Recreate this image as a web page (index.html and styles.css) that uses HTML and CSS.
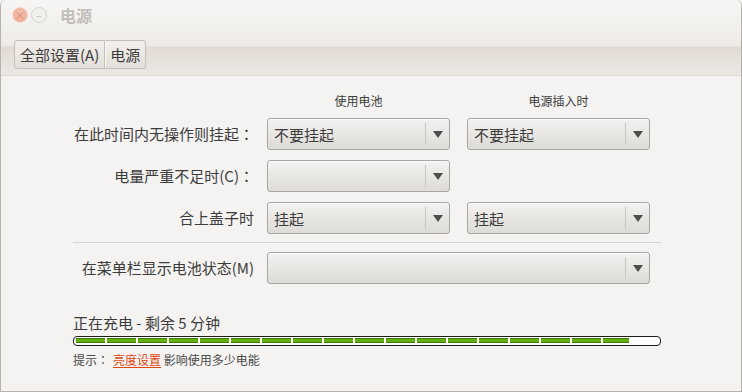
FILE: index.html
```html
<!DOCTYPE html>
<html lang="zh-CN">
<head>
  <meta charset="UTF-8">
  <title>电源</title>
  <link rel="stylesheet" href="styles.css">
</head>
<body>
  <div class="window">
    <div class="header">
      <div class="titlebar">
        <span class="ctl close">×</span>
        <span class="ctl min">–</span>
        <span class="title">电源</span>
      </div>
      <div class="crumbs">
        <button class="crumb">全部设置(A)</button>
        <button class="crumb">电源</button>
      </div>
    </div>

    <div class="content">
      <div class="form">
        <div></div>
        <div class="colhead">使用电池</div>
        <div class="colhead wide">电源插入时</div>

        <div class="label">在此时间内无操作则挂起<span class="colon">：</span></div>
        <div class="combo"><span class="value">不要挂起</span><span class="arrow"></span></div>
        <div class="combo right"><span class="value">不要挂起</span><span class="arrow"></span></div>

        <div class="label">电量严重不足时(C)<span class="colon">：</span></div>
        <div class="combo"><span class="value"></span><span class="arrow"></span></div>
        <div></div>

        <div class="label">合上盖子时</div>
        <div class="combo"><span class="value">挂起</span><span class="arrow"></span></div>
        <div class="combo right"><span class="value">挂起</span><span class="arrow"></span></div>
      </div>

      <div class="sep"></div>

      <div class="form">
        <div class="label">在菜单栏显示电池状态(M)</div>
        <div class="combo span"><span class="value"></span><span class="arrow"></span></div>
      </div>

      <div class="status">正在充电 - 剩余 5 分钟</div>
      <div class="progress"><div class="fill" style="width: 553px"></div></div>
      <div class="hint">提示<span class="colon">：</span><a class="link">亮度设置</a> 影响使用多少电能</div>
    </div>
  </div>
</body>
</html>
```

FILE: styles.css
```css
body {
  margin: 0;
  font-family: "Noto Sans CJK SC", "Noto Sans", sans-serif;
  color: #3c3c3c;
  background: #f4f3f1;
  text-spacing-trim: space-all;
}
.window {
  width: 742px;
  height: 392px;
  box-sizing: border-box;
  border: 1px solid #b8b2ac;
  border-top: none;
  border-radius: 6px 6px 0 0;
  background: #f4f3f1;
  overflow: hidden;
}
.header {
  height: 76px;
  box-sizing: border-box;
  border-bottom: 1px solid #ddd6d0;
  background: linear-gradient(#f7f6f4 0, #eeebe7 46px, #e1dad4 47px, #ece8e3 75px);
}
.titlebar {
  height: 30px;
  display: flex;
  align-items: center;
  padding-left: 11px;
}
.ctl {
  width: 14px;
  height: 14px;
  border-radius: 50%;
  display: flex;
  align-items: center;
  justify-content: center;
  font-size: 11px;
  line-height: 1;
  margin-right: 3px;
}
.close {
  background: radial-gradient(circle at 50% 40%, #f7c3b1, #f0a68c);
  border: 1px solid #efdcd3;
  color: #c98b77;
}
.min {
  background: #f2f0ed;
  border: 1px solid #d9d4cf;
  color: #bab5b0;
}
.title {
  margin-left: 10px;
  font-size: 16px;
  font-weight: bold;
  color: #c2beba;
}
.crumbs {
  display: flex;
  margin: 10px 0 0 13px;
}
.crumb {
  height: 29px;
  padding: 0 5px;
  font: 15px "Noto Sans CJK SC", "Noto Sans", sans-serif;
  color: #3c3c3c;
  border: 1px solid #c6bfb8;
  background: linear-gradient(#f3f0ed, #e4dfda);
  border-radius: 3px 0 0 3px;
}
.crumb + .crumb {
  border-left: none;
  border-radius: 0 3px 3px 0;
  box-shadow: inset 1px 0 #fbfaf9;
}
.content {
  padding: 17px 80px 0 72px;
}
.form {
  display: grid;
  grid-template-columns: 181px 183px 187px;
  column-gap: 13px;
  row-gap: 10px;
}
.colhead {
  font-size: 12px;
  line-height: 15px;
  text-align: center;
}
.colhead.wide {
  padding-left: 4px;
}
.label {
  font-size: 15px;
  line-height: 32px;
  text-align: right;
  white-space: nowrap;
}
.colon {
  display: inline-block;
  width: 1em;
  text-align: center;
  font-family: "Noto Sans CJK TC", sans-serif;
}
.combo {
  width: 183px;
  height: 32px;
  box-sizing: border-box;
  display: flex;
  align-items: center;
  border: 1px solid #aaa5a0;
  border-radius: 3px;
  background: linear-gradient(#f3f2f0, #dddbd7);
  box-shadow: inset 0 1px #fbfbfa;
}
.combo.right {
  justify-self: end;
}
.combo.span {
  grid-column: 2 / 4;
  width: 383px;
}
.value {
  flex: 1;
  padding-left: 6px;
  font-size: 15px;
}
.arrow {
  width: 23px;
  height: 22px;
  border-left: 1px solid #c9c5c0;
  position: relative;
}
.arrow::after {
  content: "";
  position: absolute;
  left: 7px;
  top: 8px;
  border-left: 5px solid transparent;
  border-right: 5px solid transparent;
  border-top: 7px solid #4e4e4e;
}
.sep {
  height: 1px;
  background: #d8d4cf;
  margin: 8px 0 9px;
}
.status {
  margin-top: 30px;
  font-size: 15px;
  line-height: 18px;
}
.progress {
  margin-top: 4px;
  height: 10px;
  box-sizing: border-box;
  border: 1.5px solid #1c1c1c;
  border-radius: 4px;
  background: #fff;
  padding: 1px 0 0 2px;
}
.fill {
  height: 5px;
  background:
    repeating-linear-gradient(90deg, transparent 0 29px, #fff 29px 31px),
    linear-gradient(#3d7a05 0 1px, #62b012 1px 4px, #3d7a05 4px);
}
.hint {
  margin-top: 6px;
  font-size: 12px;
  line-height: 16px;
  color: #4a4a4a;
}
.hint .colon {
  margin-right: 4px;
}
.link {
  color: #dd4814;
  text-decoration: underline;
  text-underline-offset: 2px;
}
```
